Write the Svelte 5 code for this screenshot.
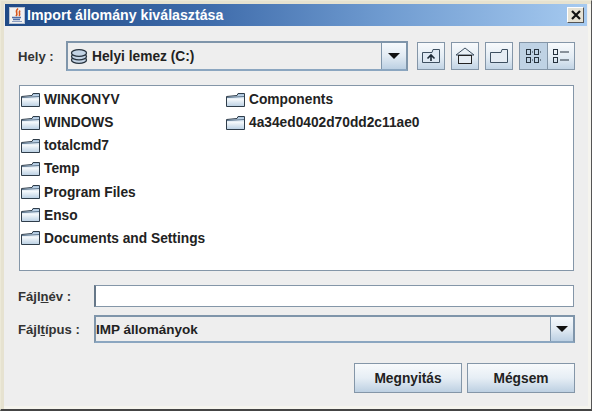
<script>
  const col1 = ["WINKONYV", "WINDOWS", "totalcmd7", "Temp", "Program Files", "Enso", "Documents and Settings"];
  const col2 = ["Components", "4a34ed0402d70dd2c11ae0"];
</script>

{#snippet folder()}
  <svg class="folder" width="20" height="16" viewBox="0 0 20 16">
    <defs>
      <linearGradient id="fold" x1="0" y1="0" x2="0" y2="1">
        <stop offset="0" stop-color="#9dbbd8" />
        <stop offset="0.45" stop-color="#f4f8fb" />
        <stop offset="1" stop-color="#b9cfe3" />
      </linearGradient>
    </defs>
    <path d="M0.5 4.5 L11 3.5 L12 1.5 L18.5 1.5 L18.5 14.5 L0.5 14.5 Z" fill="url(#fold)" stroke="#2f3d4a" />
    <path d="M1 5.5 L18 4.5" stroke="#5f7890" fill="none" />
  </svg>
{/snippet}

{#snippet arrow()}
  <span class="arrow"></span>
{/snippet}

<div class="window">
  <div class="titlebar">
    <svg class="java" width="16" height="17" viewBox="0 0 16 17">
      <rect x="0.5" y="0.5" width="15" height="16" fill="#f1f1f1" stroke="#b9c2cf" />
      <path d="M9 1.5 C5 5 10 6 7 9 M11 3.5 C9 6 12 7 10 9" stroke="#d9571c" stroke-width="1.6" fill="none" />
      <path d="M3 10.5 H12 M4 12.5 H11" stroke="#4f6fa8" stroke-width="1.4" fill="none" />
      <path d="M3 14.5 H13" stroke="#8a9cc0" stroke-width="1" fill="none" />
    </svg>
    <span class="title">Import állomány kiválasztása</span>
    <button class="close" aria-label="Bezárás">
      <svg width="12" height="12" viewBox="0 0 12 12">
        <path d="M2 2 L10 10 M10 2 L2 10" stroke="#111" stroke-width="2.2" />
      </svg>
    </button>
  </div>

  <div class="content">
    <div class="top">
      <span class="label hely">Hely :</span>
      <div class="combo location">
        <div class="value">
          <svg width="18" height="17" viewBox="0 0 18 17">
            <g fill="#c3d3e4" stroke="#27323d" stroke-width="1.3">
              <ellipse cx="9" cy="12" rx="7.5" ry="3.4" />
              <ellipse cx="9" cy="8.5" rx="7.5" ry="3.4" />
              <ellipse cx="9" cy="5" rx="7.5" ry="3.4" />
            </g>
          </svg>
          <span>Helyi lemez (C:)</span>
        </div>
        <div class="drop wide">{@render arrow()}</div>
      </div>
      <div class="tools">
        <button class="tool" aria-label="Fel">
          <svg width="20" height="18" viewBox="0 0 20 18">
            <path d="M1.5 5.5 H11 L12 2.5 H18.5 V15.5 H1.5 Z" fill="#dfe9f3" stroke="#3d4f60" />
            <path d="M10 14 V9 M6.5 11.5 L10 8 L13.5 11.5" stroke="#1d2a36" stroke-width="1.6" fill="none" />
          </svg>
        </button>
        <button class="tool" aria-label="Kezdőlap">
          <svg width="20" height="20" viewBox="0 0 20 20">
            <path d="M1 9 L10 2 L19 9 Z" fill="#e9f0f6" stroke="#3d4f60" />
            <rect x="3.5" y="9.5" width="13" height="8" fill="#e6edf4" stroke="#222" />
          </svg>
        </button>
        <button class="tool" aria-label="Új mappa">
          <svg width="20" height="18" viewBox="0 0 20 18">
            <path d="M1.5 5.5 H12 L13 2.5 H18.5 V15.5 H1.5 Z" fill="#e6edf4" stroke="#3d4f60" />
          </svg>
        </button>
        <div class="toggle">
          <button class="tool pressed" aria-label="Lista">
            <svg width="20" height="18" viewBox="0 0 20 18">
              <g fill="none" stroke="#26323e">
                <rect x="2.5" y="2.5" width="4" height="5" />
                <rect x="10.5" y="2.5" width="4" height="5" />
                <rect x="2.5" y="10.5" width="4" height="5" />
                <rect x="10.5" y="10.5" width="4" height="5" />
              </g>
              <path d="M8 5 H9 M16 5 H17 M8 13 H9 M16 13 H17" stroke="#26323e" />
            </svg>
          </button>
          <button class="tool joined" aria-label="Részletek">
            <svg width="20" height="18" viewBox="0 0 20 18">
              <g fill="none" stroke="#26323e">
                <rect x="2.5" y="2.5" width="4" height="5" />
                <rect x="2.5" y="10.5" width="4" height="5" />
                <path d="M9 5 H18 M9 13 H18" />
              </g>
            </svg>
          </button>
        </div>
      </div>
    </div>

    <div class="list">
      <div class="column first">
        {#each col1 as name}
          <div class="item">{@render folder()}<span>{name}</span></div>
        {/each}
      </div>
      <div class="column">
        {#each col2 as name}
          <div class="item">{@render folder()}<span>{name}</span></div>
        {/each}
      </div>
    </div>

    <div class="field filename">
      <span class="label">Fájl<u>n</u>év :</span>
      <input type="text" />
    </div>
    <div class="field filetype">
      <span class="label">Fájl<u>t</u>ípus :</span>
      <div class="combo type">
        <div class="value">IMP állományok</div>
        <div class="drop">{@render arrow()}</div>
      </div>
    </div>

    <div class="actions">
      <button class="btn">Megnyitás</button>
      <button class="btn">Mégsem</button>
    </div>
  </div>
</div>

<style>
  :global(body) {
    margin: 0;
    background: #eeeeee;
  }

  .window {
    width: 592px;
    height: 411px;
    box-sizing: border-box;
    display: flex;
    flex-direction: column;
    background: #eeeeee;
    border-top: 1px solid #ece9d8;
    border-left: 1px solid #ece9d8;
    border-right: 1px solid #555;
    border-bottom: 2px solid #444;
    box-shadow: inset 3px 3px 0 #e6e2d0, inset -3px -3px 0 #f5f4ee;
    padding: 3px 4px 2px 4px;
    font-family: "Liberation Sans", Arial, sans-serif;
    font-weight: bold;
    font-size: 13.75px;
    color: #222;
  }

  .titlebar {
    height: 22px;
    flex: none;
    display: flex;
    align-items: center;
    gap: 2px;
    padding: 0 3px 0 4px;
    background: linear-gradient(90deg, #1f4a86 0%, #3f6cab 35%, #6f9bd0 65%, #a6caf0 100%);
  }

  .java {
    flex: none;
  }

  .title {
    flex: 1;
    color: #fff;
    font-size: 14.2px;
  }

  .close {
    width: 17px;
    height: 16px;
    padding: 0;
    display: flex;
    align-items: center;
    justify-content: center;
    background: #e6e2d4;
    border: 1px solid;
    border-color: #fff #555 #555 #fff;
  }

  .content {
    flex: 1;
    display: flex;
    flex-direction: column;
    padding: 15px 13px 0 13px;
  }

  .top {
    display: flex;
    align-items: center;
  }

  .label {
    color: #333;
    font-size: 13.1px;
  }

  .hely {
    width: 48px;
    flex: none;
  }

  .combo {
    display: flex;
    box-sizing: border-box;
    border: 2px solid #7f95aa;
    border-bottom-color: #8ba6c0;
    background: #eeeeee;
  }

  .location {
    width: 342px;
    height: 30px;
    flex: none;
  }

  .value {
    flex: 1;
    display: flex;
    align-items: center;
    gap: 4px;
    padding-left: 2px;
  }

  .drop {
    width: 22px;
    flex: none;
    display: flex;
    align-items: center;
    justify-content: center;
    border-left: 1px solid #7f95aa;
    background: linear-gradient(180deg, #f6f9fc 0%, #e2ebf3 50%, #bcd0e3 100%);
  }

  .drop.wide {
    width: 24px;
  }

  .arrow {
    width: 0;
    height: 0;
    border-left: 6px solid transparent;
    border-right: 6px solid transparent;
    border-top: 6px solid #111;
  }

  .tools {
    display: flex;
    gap: 6px;
    margin-left: 9px;
  }

  .toggle {
    display: flex;
  }

  .tool {
    width: 28px;
    height: 28px;
    padding: 0;
    display: flex;
    align-items: center;
    justify-content: center;
    border: 1px solid #8496a8;
    background: linear-gradient(180deg, #f8fafc 0%, #e3ecf4 55%, #c2d4e5 100%);
  }

  .tool.pressed {
    background: #bfd2e4;
    border-right: none;
  }

  .list {
    height: 186px;
    flex: none;
    box-sizing: border-box;
    margin: 14px 0 0 1px;
    display: flex;
    background: #fff;
    border: 1px solid #8496a8;
    padding-top: 2px;
  }

  .column {
    display: flex;
    flex-direction: column;
  }

  .column.first {
    width: 205px;
  }

  .item {
    height: 23.15px;
    display: flex;
    align-items: center;
    gap: 3px;
    padding-left: 1px;
    color: #222;
  }

  .field {
    display: flex;
    align-items: center;
  }

  .field .label {
    width: 76px;
    flex: none;
  }

  .filename {
    margin-top: 14px;
  }

  .filetype {
    margin-top: 8px;
  }

  input {
    flex: 1;
    height: 22px;
    box-sizing: border-box;
    min-width: 0;
    border: 1px solid #8496a8;
    border-left: 2px solid #667788;
    background: #fff;
    outline: none;
  }

  .type {
    flex: 1;
    height: 28px;
    margin-right: -1px;
    font-size: 13.5px;
  }

  .type .value {
    padding-left: 0;
  }

  .actions {
    display: flex;
    justify-content: flex-end;
    gap: 5px;
    margin-top: 20px;
    margin-right: -1px;
  }

  .btn {
    width: 108px;
    height: 30px;
    padding: 0;
    font: inherit;
    color: #222;
    border: 1px solid #8496a8;
    background: linear-gradient(180deg, #f8fafc 0%, #e6eef5 50%, #bdd0e2 100%);
  }
</style>
